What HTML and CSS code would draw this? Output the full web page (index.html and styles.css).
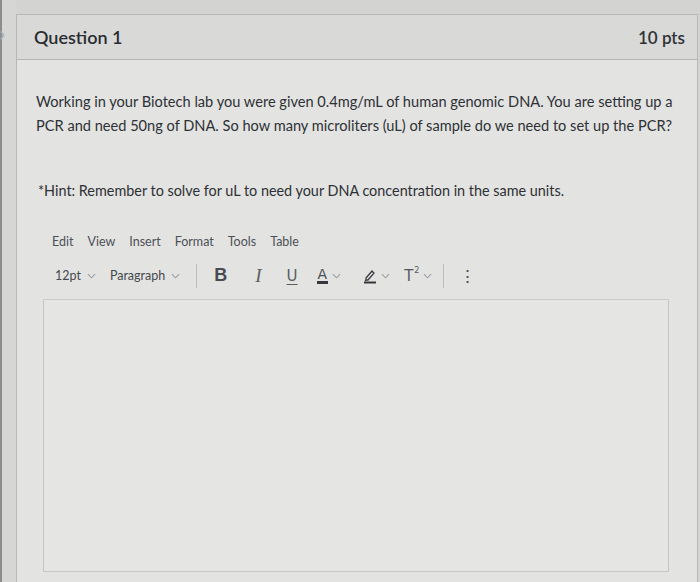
FILE: index.html
```html
<!DOCTYPE html>
<html>
<head>
<meta charset="utf-8">
<link rel="stylesheet" href="styles.css">
</head>
<body>
<div class="screen">
  <div class="edge"><span class="chev">&#x203A;</span></div>
  <div class="card">
    <div class="header">
      <span class="title">Question 1</span>
      <span class="pts">10 pts</span>
    </div>
    <div class="body">
      <p class="q">Working in your Biotech lab you were given 0.4mg/mL of human genomic DNA. You are setting up a PCR and need 50ng of DNA. So how many microliters (uL) of sample do we need to set up the PCR?</p>
      <p class="hint">*Hint: Remember to solve for uL to need your DNA concentration in the same units.</p>
      <div class="editor">
        <div class="menu">
          <span>Edit</span><span>View</span><span>Insert</span><span>Format</span><span>Tools</span><span>Table</span>
        </div>
        <div class="toolbar">
          <span class="sel">12pt <svg class="dd" viewBox="0 0 10 6"><path d="M1 1l4 4 4-4"/></svg></span>
          <span class="sel para">Paragraph <svg class="dd" viewBox="0 0 10 6"><path d="M1 1l4 4 4-4"/></svg></span>
          <span class="sep"></span>
          <span class="btn bold">B</span>
          <span class="btn ital">I</span>
          <span class="btn und">U</span>
          <span class="btn col colA"><span class="a">A</span><svg class="dd" viewBox="0 0 10 6"><path d="M1 1l4 4 4-4"/></svg></span>
          <span class="btn col colP">
            <svg class="pen" viewBox="0 0 14 16"><path d="M3 10l6-7 2 2-6 7H3z M3 12l-1 1"/><rect x="1" y="13.5" width="12" height="2" class="bar"/></svg>
            <svg class="dd" viewBox="0 0 10 6"><path d="M1 1l4 4 4-4"/></svg>
          </span>
          <span class="btn col sup"><span class="t">T<span class="two">2</span></span><svg class="dd" viewBox="0 0 10 6"><path d="M1 1l4 4 4-4"/></svg></span>
          <span class="sep sep2"></span>
          <span class="btn more">&#x22EE;</span>
        </div>
        <div class="area"></div>
      </div>
    </div>
  </div>
</div>
</body>
</html>
```
FILE: styles.css
```css
html, body {
  margin: 0;
  padding: 0;
}
body {
  width: 700px;
  height: 582px;
  overflow: hidden;
  background: #d3d3d1;
  font-family: Lato, "Open Sans", sans-serif;
  color: #2e3238;
}
.screen {
  display: flex;
  height: 582px;
  border-left: 2px solid #8d8d8d;
  box-sizing: border-box;
}
.edge {
  width: 14px;
  flex: none;
  background: #d6d6d4;
  position: relative;
}
.chev {
  position: absolute;
  left: -3px;
  top: 22px;
  font-size: 22px;
  color: #a9a9a9;
  line-height: 1;
}
.card {
  flex: none;
  width: 680px;
  margin-top: 14px;
  border-top: 1px solid #b8b8b6;
  border-left: 1px solid #b8b8b6;
  border-right: 1px solid #b8b8b6;
  background: #e3e3e1;
  display: flex;
  flex-direction: column;
}
.header {
  height: 44px;
  background: #d9d9d7;
  border-bottom: 1px solid #b5b5b3;
  display: flex;
  align-items: center;
  justify-content: space-between;
  padding: 0 12px 0 17px;
}
.title {
  font-size: 18px;
  font-weight: 600;
  color: #2a2d31;
}
.pts {
  font-size: 17px;
  font-weight: 600;
  color: #2f3236;
}
.body {
  padding: 30px 0 0 19px;
  flex: 1;
  display: flex;
  flex-direction: column;
}
.q {
  margin: 0;
  font-size: 14.6px;
  line-height: 24px;
  width: 660px;
  color: #2e3136;
}
.hint {
  margin: 43px 0 0 2px;
  font-size: 14.4px;
  line-height: 20px;
  color: #2e3136;
}
.editor {
  margin: 29px 0 0 7px;
  width: 626px;
  display: flex;
  flex-direction: column;
  flex: 1;
}
.menu {
  display: flex;
  font-size: 12.5px;
  color: #4d5157;
  padding-left: 9px;
  height: 22px;
  align-items: center;
}
.menu span {
  margin-right: 14px;
}
.toolbar {
  display: flex;
  align-items: center;
  height: 44px;
  box-sizing: border-box;
  padding: 0 0 4px 12px;
  margin-top: 4px;
  border-bottom: 1px solid #cacac8;
  font-size: 12.5px;
  color: #45494f;
}
.sel {
  display: flex;
  align-items: center;
  margin-right: 14px;
}
.para {
  margin-right: 16px;
}
.dd {
  width: 9px;
  height: 6px;
  margin-left: 6px;
  fill: none;
  stroke: #9a9ea3;
  stroke-width: 1.2;
}
.sep {
  width: 1px;
  height: 24px;
  background: #bdbdbb;
  margin-right: 17px;
}
.sep2 {
  margin-left: 11px;
  margin-right: 15px;
}
.btn {
  display: flex;
  align-items: center;
  margin-right: 18px;
  color: #3b3f44;
}
.bold {
  font-family: "Liberation Sans", sans-serif;
  font-size: 18px;
  font-weight: 700;
  color: #484c51;
  margin-right: 28px;
}
.ital {
  font-family: "Liberation Serif", serif;
  font-style: italic;
  font-size: 19px;
  color: #5a5e63;
  margin-right: 25px;
}
.und {
  font-family: "DejaVu Sans", sans-serif;
  font-size: 15px;
  text-decoration: underline;
  text-underline-offset: 3px;
  color: #5a5e63;
  margin-right: 19px;
}
.col .a {
  font-family: "DejaVu Sans", sans-serif;
  font-size: 14px;
  color: #4a4e53;
  border-bottom: 3px solid #34383d;
  line-height: 14px;
  padding: 0 1px;
}
.col .dd {
  margin-left: 4px;
}
.colA {
  margin-right: 22px;
}
.colP {
  margin-right: 14px;
}
.pen {
  width: 14px;
  height: 16px;
  fill: none;
  stroke: #3a3e43;
  stroke-width: 1.3;
}
.pen .bar {
  fill: #34383d;
  stroke: none;
}
.sup {
  font-family: "DejaVu Sans", sans-serif;
  font-size: 15px;
  color: #55595e;
  margin-right: 0;
}
.sup .t {
  display: flex;
  align-items: flex-start;
}
.sup .two {
  font-size: 8px;
  margin-left: 1px;
  margin-top: -1px;
}
.more {
  font-size: 17px;
  color: #4a4e53;
  margin-right: 0;
}
.area {
  flex: 1;
  margin-bottom: 10px;
  border: 1px solid #c6c6c4;
  border-top: none;
  background: #e5e5e3;
}
```
